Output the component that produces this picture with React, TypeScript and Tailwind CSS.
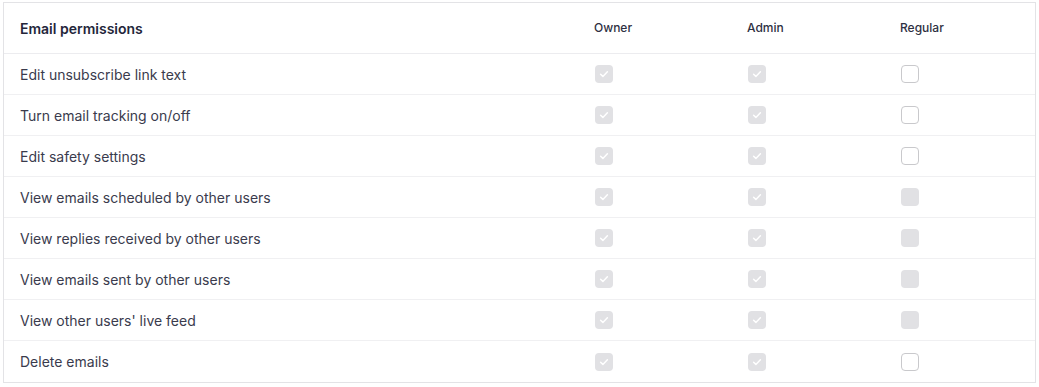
const rows = [
  { label: "Edit unsubscribe link text", regular: "off" },
  { label: "Turn email tracking on/off", regular: "off" },
  { label: "Edit safety settings", regular: "off" },
  { label: "View emails scheduled by other users", regular: "locked" },
  { label: "View replies received by other users", regular: "locked" },
  { label: "View emails sent by other users", regular: "locked" },
  { label: "View other users' live feed", regular: "locked" },
  { label: "Delete emails", regular: "off" },
];

type State = "checked" | "off" | "locked";

const Box = ({ state }: { state: State }) => {
  if (state === "off") {
    return <span className="block ml-[1px] w-[18px] h-[18px] rounded-[4px] border-[1.5px] border-[#c9c9cc] bg-white" />;
  }
  return (
    <span className="flex ml-[1px] items-center justify-center w-[18px] h-[18px] rounded-[4px] bg-[#e1e1e4]">
      {state === "checked" && (
        <svg width="12" height="12" viewBox="0 0 12 12" fill="none">
          <path d="M2.6 6.2l2.3 2.2 4.5-4.6" stroke="white" strokeWidth="1.5" strokeLinecap="round" strokeLinejoin="round" />
        </svg>
      )}
    </span>
  );
};

const Cell = ({ children }: { children: React.ReactNode }) => (
  <div className="w-[153px] flex items-center pl-[67px]">{children}</div>
);

const Heading = ({ children }: { children: React.ReactNode }) => (
  <span className="text-[12px] font-medium text-[#2e3042] whitespace-nowrap">{children}</span>
);

export default function App() {
  return (
    <div className="bg-white pt-[2px] pl-[3px] font-['Inter',sans-serif]">
      <div className="w-[1033px] border border-[#e3e3e6]">
        <div className="flex h-[51px] pr-[49px] border-b border-[#ececef]">
          <div className="flex-1 flex items-center pl-[16px] pt-[1px] text-[14px] font-semibold text-[#24263a]">
            Email permissions
          </div>
          <Cell><Heading>Owner</Heading></Cell>
          <Cell><Heading>Admin</Heading></Cell>
          <Cell><Heading>Regular</Heading></Cell>
        </div>
        {rows.map((r, i) => (
          <div
            key={r.label}
            className={`flex h-[41px] pr-[49px] ${i < rows.length - 1 ? "border-b border-[#f0f0f2]" : ""}`}
          >
            <div className="flex-1 flex items-center pl-[16px] text-[14px] text-[#3a3b4d]">{r.label}</div>
            <Cell><Box state="checked" /></Cell>
            <Cell><Box state="checked" /></Cell>
            <Cell><Box state={r.regular as State} /></Cell>
          </div>
        ))}
      </div>
    </div>
  );
}
